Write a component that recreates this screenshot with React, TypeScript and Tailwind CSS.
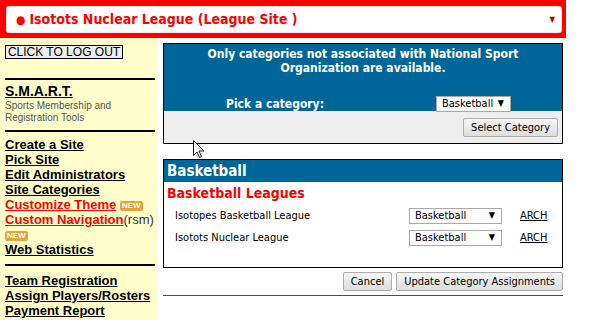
import React from 'react';

const tahoma = { fontFamily: '"DejaVu Sans Condensed", "DejaVu Sans", Tahoma, sans-serif' };
const arial = { fontFamily: '"Liberation Sans", Arial, sans-serif' };

function NewBadge() {
  return (
    <span className="inline-block rounded-[2px] bg-[#e8a33c] px-[2px] text-[8px] leading-[10px] font-bold text-white align-middle">
      NEW
    </span>
  );
}

function SideLink({ children, red }: { children: React.ReactNode; red?: boolean }) {
  return (
    <a className={`underline font-bold ${red ? 'text-[#ff0000]' : 'text-black'}`}>{children}</a>
  );
}

function Sidebar() {
  return (
    <div className="w-[158px] shrink-0 bg-[#ffffcc] px-[5px] pt-[6px] text-[13px] leading-[15px]" style={arial}>
      <button className="w-[118px] border border-black bg-[#efefef] text-[12px] leading-[12px] text-black">
        CLICK TO LOG OUT
      </button>
      <div className="mt-[19px] h-[2px] w-[150px] bg-black" />
      <div className="mt-[4px] text-[14px] leading-[15px] font-bold underline">S.M.A.R.T.</div>
      <div className="mt-[1px] text-[10px] leading-[12px] text-[#555]">
        Sports Membership and
        <br />
        Registration Tools
      </div>
      <div className="mt-[6px] h-[2px] w-[150px] bg-black" />
      <div className="mt-[5px] flex flex-col">
        <div><SideLink>Create a Site</SideLink></div>
        <div><SideLink>Pick Site</SideLink></div>
        <div><SideLink>Edit Administrators</SideLink></div>
        <div><SideLink>Site Categories</SideLink></div>
        <div className="whitespace-nowrap">
          <SideLink red>Customize Theme</SideLink> <NewBadge />
        </div>
        <div className="whitespace-nowrap">
          <SideLink red>Custom Navigation</SideLink>
          <span className="text-[#333]">(rsm)</span>
        </div>
        <div>
          <NewBadge />
        </div>
        <div><SideLink>Web Statistics</SideLink></div>
      </div>
      <div className="mt-[7px] h-[2px] w-[150px] bg-black" />
      <div className="mt-[7px] flex flex-col">
        <div><SideLink>Team Registration</SideLink></div>
        <div><SideLink>Assign Players/Rosters</SideLink></div>
        <div><SideLink>Payment Report</SideLink></div>
        <div><SideLink>Registration Form</SideLink></div>
      </div>
    </div>
  );
}

function FakeSelect({ width, label }: { width: string; label: string }) {
  return (
    <div
      className={`${width} flex h-[16px] items-center justify-between border border-[#a9a9a9] bg-white pl-[5px] pr-[6px] text-[11px] text-black`}
      style={tahoma}
    >
      <span>{label}</span>
      <span className="text-[9px]">▼</span>
    </div>
  );
}

function Button({ children }: { children: React.ReactNode }) {
  return (
    <button
      className="h-[19px] rounded-[2px] border border-[#adadad] bg-gradient-to-b from-[#f6f6f6] to-[#dddddd] px-[7px] text-[11px] leading-[15px] text-black"
      style={tahoma}
    >
      {children}
    </button>
  );
}

function LeagueRow({ name }: { name: string }) {
  return (
    <div className="flex h-[22px] items-center">
      <span className="w-[245px] pl-[11px] text-[11px] text-black">{name}</span>
      <FakeSelect width="w-[93px]" label="Basketball" />
      <a className="ml-[18px] text-[11px] text-black underline">ARCH</a>
    </div>
  );
}

function Main() {
  return (
    <div className="ml-[5px] w-[400px] pt-[5px]" style={tahoma}>
      <div className="border border-black">
        <div className="h-[67px] bg-[#006699] pt-[3px] text-white">
          <p className="text-center text-[12px] leading-[14px] font-bold">
            Only categories not associated with National Sport
            <br />
            Organization are available.
          </p>
          <div className="mt-[20px] flex items-center">
            <span className="ml-[62px] w-[210px] text-[12px] font-bold">Pick a category:</span>
            <FakeSelect width="w-[75px]" label="Basketball" />
          </div>
        </div>
        <div className="flex h-[32px] items-center justify-end bg-[#eeeeee] pr-[4px]">
          <Button>Select Category</Button>
        </div>
      </div>

      <div className="mt-[15px] border border-black">
        <div className="h-[22px] bg-[#006699] pl-[3px] text-[15px] leading-[22px] font-bold text-white">
          Basketball
        </div>
        <div className="pt-[3px] pl-[3px] text-[14px] leading-[17px] font-bold text-[#ff0000]">
          Basketball Leagues
        </div>
        <div className="mt-[3px] pb-[18px]">
          <LeagueRow name="Isotopes Basketball League" />
          <LeagueRow name="Isotots Nuclear League" />
        </div>
      </div>

      <div className="mt-[4px] flex justify-end gap-[4px]">
        <Button>Cancel</Button>
        <Button>Update Category Assignments</Button>
      </div>
      <div className="mt-[4px] h-px bg-[#ff0000]" />
    </div>
  );
}

export default function App() {
  return (
    <div className="relative h-[320px] w-[592px] overflow-hidden bg-white">
      <div className="h-[38px] w-[566px] bg-[#ff0000] pt-[6px] pr-[4px] pb-[5px] pl-[6px]">
        <div
          className="flex h-full items-center justify-between rounded-[3px] bg-white pr-[7px] pl-[10px] shadow-[inset_0_0_2px_rgba(0,0,0,0.3)]"
          style={tahoma}
        >
          <span className="text-[14px] font-bold text-[#ff0000]">
            <span className="mr-[4px] text-[12px]">●</span>Isotots Nuclear League (League Site )
          </span>
          <span className="text-[8px] text-[#cc0000]">▼</span>
        </div>
      </div>
      <div className="flex">
        <Sidebar />
        <Main />
      </div>
      <svg className="absolute top-[140px] left-[193px]" width="12" height="19" viewBox="0 0 12 19">
        <path d="M0.5 0.5 L0.5 15.5 L4 12 L6.5 17.5 L8.5 16.5 L6 11 L11 11 Z" fill="white" stroke="#1a1a1a" strokeWidth="1" />
      </svg>
    </div>
  );
}
